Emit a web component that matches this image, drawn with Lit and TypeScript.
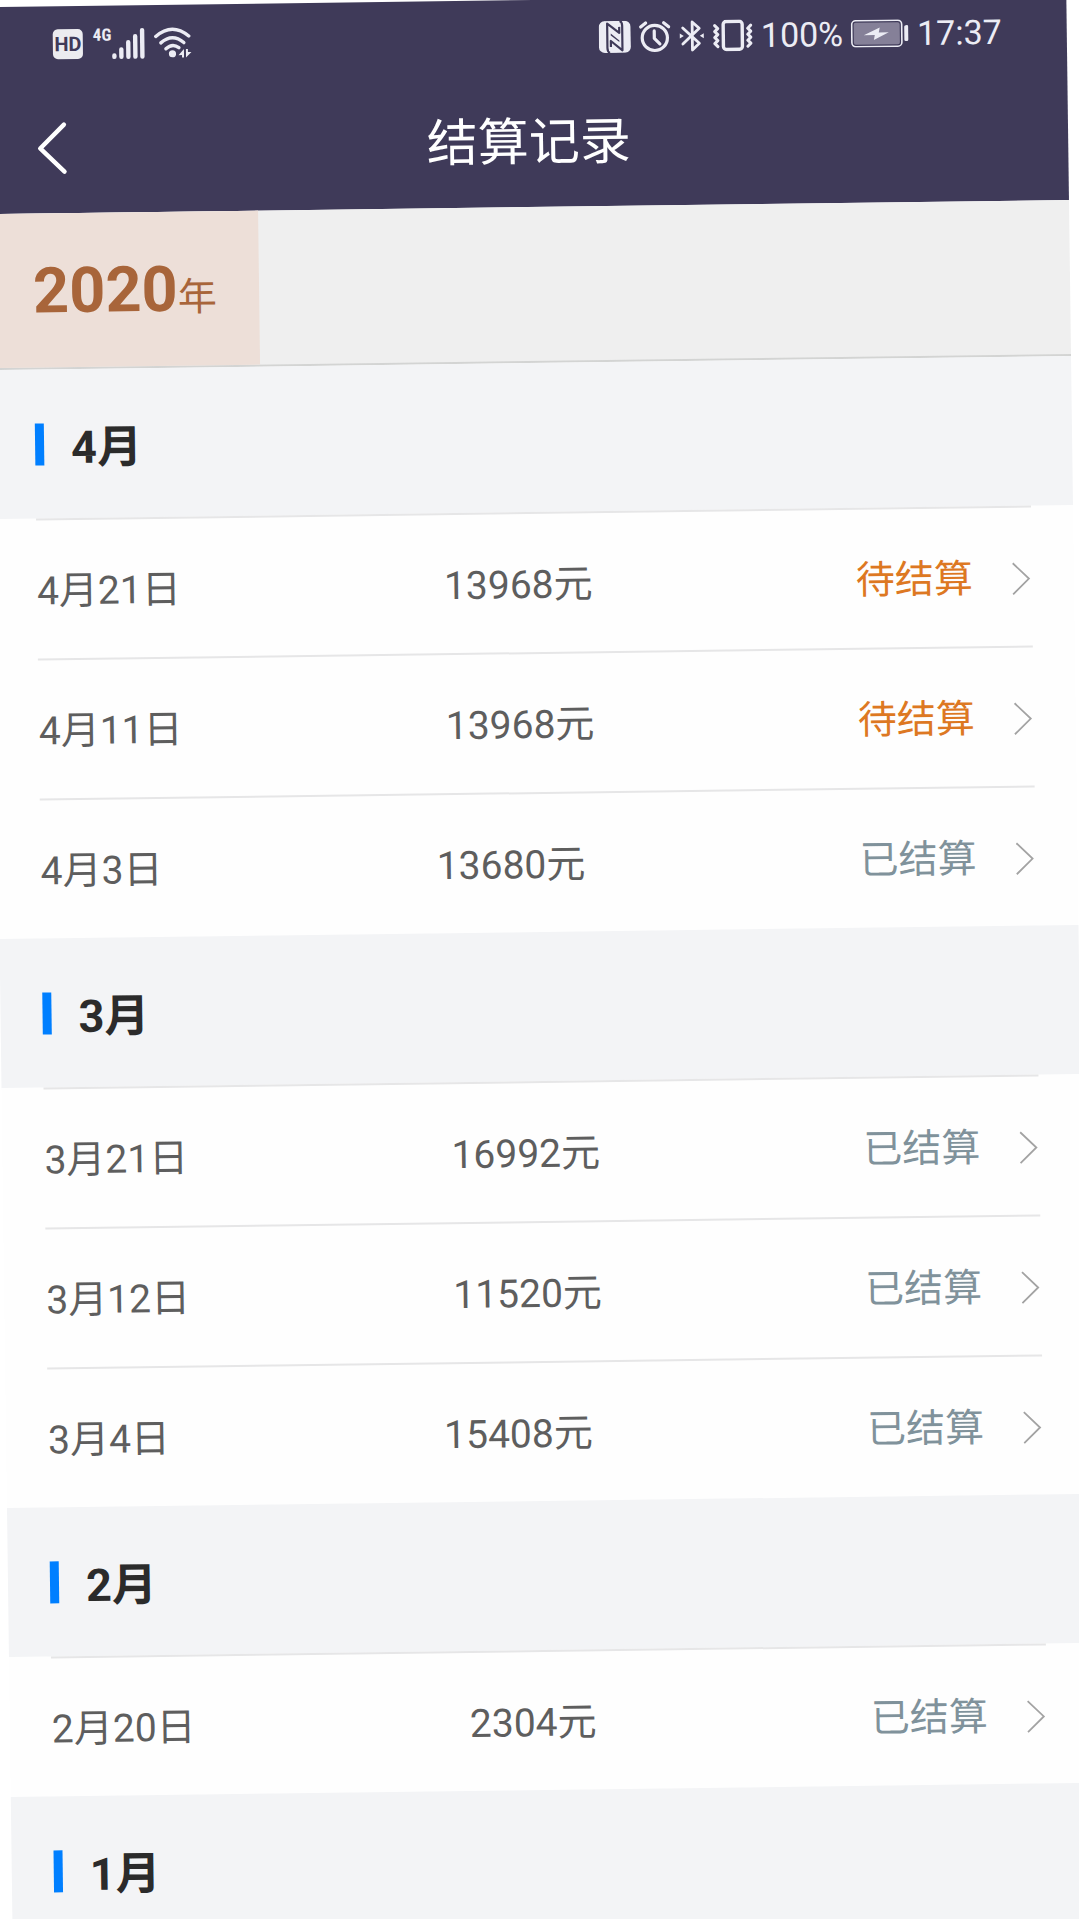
import { LitElement, html, css, svg } from "lit";
import { customElement, property } from "lit/decorators.js";

interface Settlement {
  date: string;
  amount: number;
  settled: boolean;
}

interface MonthGroup {
  month: string;
  items: Settlement[];
}

const GROUPS: MonthGroup[] = [
  {
    month: "4月",
    items: [
      { date: "4月21日", amount: 13968, settled: false },
      { date: "4月11日", amount: 13968, settled: false },
      { date: "4月3日", amount: 13680, settled: true },
    ],
  },
  {
    month: "3月",
    items: [
      { date: "3月21日", amount: 16992, settled: true },
      { date: "3月12日", amount: 11520, settled: true },
      { date: "3月4日", amount: 15408, settled: true },
    ],
  },
  {
    month: "2月",
    items: [{ date: "2月20日", amount: 2304, settled: true }],
  },
  { month: "1月", items: [] },
];

const icon = (width: number, height: number, body: unknown) => html`
  <svg width=${width} height=${height} viewBox="0 0 ${width} ${height}" fill="none" aria-hidden="true">
    ${body}
  </svg>
`;

const signalIcon = icon(34, 32, svg`
  <g stroke="currentColor" stroke-width="4.4" stroke-linecap="round">
    <path d="M2.4 28v1.4M9.4 22v7.4M16.4 15v14.4M23.4 9v20.4M30.4 3v26.4"/>
  </g>`);

const wifiIcon = icon(38, 32, svg`
  <g stroke="currentColor" stroke-width="3.4" stroke-linecap="round">
    <path d="M2 9.5Q18.500 -4.500 35 9.500"/>
    <path d="M7 16Q18.500 6 30 16"/>
    <path d="M12 22Q18.500 16 25 21"/>
  </g>
  <circle cx="18.500" cy="27" r="3.600" fill="currentColor"/>
  <path d="M30 22.500V31H28V28.500H24.500ZM32 22.500V31L37.500 25.500H34V22.500Z" fill="currentColor"/>`);

const nfcIcon = icon(32, 32, svg`
  <rect width="32" height="32" rx="6" fill="currentColor"/>
  <g stroke="#3f3a59" stroke-width="2.200" stroke-linejoin="round">
    <path d="M11 32Q8.500 31 8.500 27V2.500L20.500 12V6"/>
    <path d="M21 0Q23.500 1 23.500 5V29.500L12 20V26"/>
  </g>
  <path d="M12 12.500L20.500 19.500V21L12 14.500Z" fill="#3f3a59"/>`);

const alarmIcon = icon(32, 32, svg`
  <g stroke="currentColor" stroke-width="3.200" stroke-linecap="round" stroke-linejoin="round">
    <circle cx="16" cy="17.500" r="12.600"/>
    <path d="M15.500 10.500V18L21 23.500M2 6.500L7 2.500M30 6.500L25 2.500"/>
  </g>`);

const bluetoothIcon = icon(26, 32, svg`
  <path d="M4 8L20.500 23.500L13.500 30V2L20.500 8.500L4 24" stroke="currentColor" stroke-width="2.800" stroke-linejoin="round" stroke-linecap="round"/>
  <path d="M1 13.500L5 16L1 18.500ZM25 13.500L21 16L25 18.500Z" fill="currentColor"/>`);

const vibrateIcon = icon(40, 32, svg`
  <g stroke="currentColor" stroke-linejoin="round" stroke-linecap="round">
    <rect x="10.500" y="2" width="19" height="28" rx="3" stroke-width="3.400"/>
    <path stroke-width="3" d="M2 6L5 9L2 12L5 15L2 18L5 21L2 24L5 27M38 6L35 9L38 12L35 15L38 18L35 21L38 24L35 27"/>
  </g>`);

const batteryIcon = icon(58, 28, svg`
  <rect x="1" y="1" width="50" height="26" rx="4" stroke="currentColor" stroke-width="1.600"/>
  <rect x="3" y="3" width="46" height="22" rx="2" fill="#858098"/>
  <path d="M13 15.500L29 8L28 13H38L23 20.500L24 15.500Z" fill="currentColor"/>
  <rect x="53.500" y="6" width="4" height="16" rx="1.500" fill="currentColor"/>`);

const backIcon = icon(34, 56, svg`
  <path d="M29 4.500L5 28L29 51.500" stroke="currentColor" stroke-width="4.400" stroke-linecap="round" stroke-linejoin="round"/>`);

const chevronIcon = icon(20, 34, svg`
  <path d="M1 1.500L17 17L1 32.500" stroke="#a3a3a3" stroke-width="1.800"/>`);

@customElement("status-bar")
export class StatusBar extends LitElement {
  static styles = css`
    :host {
      display: flex;
      justify-content: space-between;
      align-items: center;
      height: 76px;
      padding: 0 65px;
      color: #ececf4;
      font-size: 34px;
      line-height: 40px;
    }
    .side {
      display: flex;
      align-items: center;
      gap: 8px;
    }
    .network {
      display: flex;
      align-items: flex-start;
      padding-left: 2px;
    }
    .indicators {
      display: flex;
      align-items: center;
      gap: 8px;
    }
    .hd {
      width: 30px;
      border-radius: 5px;
      background: #ececf0;
      color: #3f3a59;
      font-size: 20px;
      font-weight: 700;
      line-height: 30px;
      text-align: center;
    }
    .generation {
      font-family: "Roboto Condensed", "Liberation Sans Narrow", Roboto, sans-serif;
      font-size: 17px;
      font-weight: 700;
      line-height: 15px;
    }
    svg {
      display: block;
      flex: none;
    }
  `;

  render() {
    return html`
      <div class="side">
        <span class="hd">HD</span>
        <span class="network"><span class="generation">4G</span>${signalIcon}</span>
        ${wifiIcon}
      </div>
      <div class="side">
        <span class="indicators">${nfcIcon}${alarmIcon}${bluetoothIcon}${vibrateIcon}</span>
        <span>100%</span>
        ${batteryIcon}
        <span>17:37</span>
      </div>
    `;
  }
}

@customElement("settlement-row")
export class SettlementRow extends LitElement {
  @property({ attribute: false }) item!: Settlement;

  static styles = css`
    :host {
      display: block;
      margin: 0 42px;
      border-top: 2px solid #e6e6e7;
    }
    .row {
      display: flex;
      justify-content: space-between;
      align-items: center;
      box-sizing: border-box;
      height: 138px;
      padding-top: 4px;
      color: #5e5e5e;
      font-size: 39px;
      line-height: 56px;
      text-decoration: none;
    }
    .state {
      display: flex;
      align-items: center;
      gap: 39px;
      color: #80929b;
    }
    .pending {
      color: #dd7822;
    }
    svg {
      display: block;
    }
  `;

  render() {
    const { date, amount, settled } = this.item;
    return html`
      <a class="row" href="#">
        <span>${date}</span>
        <span>${amount}元</span>
        <span class="state ${settled ? "" : "pending"}">${settled ? "已结算" : "待结算"}${chevronIcon}</span>
      </a>
    `;
  }
}

@customElement("app-root")
export class AppRoot extends LitElement {
  static styles = css`
    :host {
      display: block;
      overflow: hidden;
      background: #fff;
      font-family: Roboto, "Noto Sans CJK SC", sans-serif;
    }
    .screen {
      display: flex;
      flex-direction: column;
      min-height: 100vh;
      background: #fefefe;
      transform: rotate(-0.75deg);
    }
    .top {
      background: #3f3a59;
    }
    .nav {
      display: grid;
      grid-template-columns: 1fr auto 1fr;
      align-items: center;
      height: 131px;
      padding: 0 46px;
      color: #fff;
    }
    .back {
      justify-self: start;
      padding: 0;
      border: 0;
      background: none;
      color: inherit;
    }
    .back svg {
      display: block;
    }
    .title {
      margin: 0;
      padding-top: 2px;
      font-size: 51px;
      font-weight: 400;
      line-height: 72px;
    }
    .years {
      display: flex;
      height: 154px;
      border-bottom: 2px solid #d3d4d3;
      background: #efefef;
    }
    .year {
      padding: 10px 42px 0;
      border: 0;
      background: #eddfd8;
      color: #a8653a;
      font-family: inherit;
      font-size: 39px;
      line-height: 84px;
    }
    .number {
      font-size: 63px;
      font-weight: 700;
    }
    .group:last-child {
      flex: 1;
      background: #f3f4f6;
    }
    .month {
      display: flex;
      align-items: center;
      gap: 27px;
      height: 149px;
      margin: 0;
      padding: 0 42px;
      background: #f3f4f6;
      color: #2b2b2b;
      font-size: 45px;
      font-weight: 700;
      line-height: 64px;
    }
    .name {
      padding-top: 8px;
    }
    .month::before {
      content: "";
      width: 9px;
      height: 42px;
      background: #007fff;
    }
  `;

  render() {
    return html`
      <div class="screen">
        <header class="top">
          <status-bar></status-bar>
          <div class="nav">
            <button class="back" aria-label="返回">${backIcon}</button>
            <h1 class="title">结算记录</h1>
          </div>
        </header>
        <nav class="years">
          <button class="year"><span class="number">2020</span>年</button>
        </nav>
        ${GROUPS.map(
          (group) => html`
            <section class="group">
              <h2 class="month"><span class="name">${group.month}</span></h2>
              ${group.items.map((item) => html`<settlement-row .item=${item}></settlement-row>`)}
            </section>
          `,
        )}
      </div>
    `;
  }
}
